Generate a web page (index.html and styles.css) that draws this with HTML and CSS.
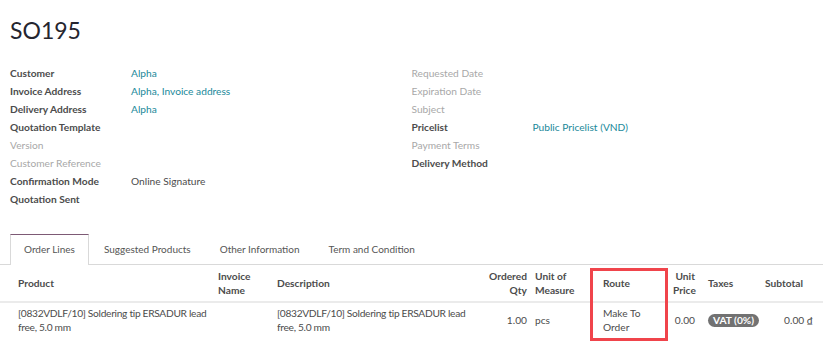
FILE: index.html
```html
<!DOCTYPE html>
<html lang="en">
<head>
  <meta charset="UTF-8" />
  <title>SO195</title>
  <link rel="stylesheet" href="styles.css">
</head>
<body>
  <div class="sheet">
    <h1 class="title">SO195</h1>
    <div class="groups">
      <table class="group">
        <tr><td class="label">Customer</td><td><a href="#">Alpha</a></td></tr>
        <tr><td class="label">Invoice Address</td><td><a href="#">Alpha, Invoice address</a></td></tr>
        <tr><td class="label">Delivery Address</td><td><a href="#">Alpha</a></td></tr>
        <tr><td class="label">Quotation Template</td><td></td></tr>
        <tr><td class="label empty">Version</td><td></td></tr>
        <tr><td class="label empty">Customer Reference</td><td></td></tr>
        <tr><td class="label">Confirmation Mode</td><td>Online Signature</td></tr>
        <tr><td class="label">Quotation Sent</td><td></td></tr>
      </table>
      <table class="group">
        <tr><td class="label empty">Requested Date</td><td></td></tr>
        <tr><td class="label empty">Expiration Date</td><td></td></tr>
        <tr><td class="label empty">Subject</td><td></td></tr>
        <tr><td class="label">Pricelist</td><td><a href="#">Public Pricelist (VND)</a></td></tr>
        <tr><td class="label empty">Payment Terms</td><td></td></tr>
        <tr><td class="label">Delivery Method</td><td></td></tr>
      </table>
    </div>
  </div>

  <ul class="tabs">
    <li class="active">Order Lines</li>
    <li>Suggested Products</li>
    <li>Other Information</li>
    <li>Term and Condition</li>
  </ul>

  <div class="lines">
    <table class="list">
      <colgroup>
        <col style="width:214px">
        <col style="width:59px">
        <col style="width:200px">
        <col style="width:58px">
        <col style="width:68px">
        <col style="width:70px">
        <col style="width:30px">
        <col style="width:62px">
        <col>
      </colgroup>
      <thead>
        <tr>
          <th class="first">Product</th>
          <th>Invoice<br>Name</th>
          <th>Description</th>
          <th class="num">Ordered<br>Qty</th>
          <th>Unit of<br>Measure</th>
          <th>Route</th>
          <th class="num">Unit<br>Price</th>
          <th class="taxes">Taxes</th>
          <th>Subtotal</th>
        </tr>
      </thead>
      <tbody>
        <tr>
          <td class="first text">[0832VDLF/10] Soldering tip ERSADUR lead free, 5.0 mm</td>
          <td></td>
          <td class="text">[0832VDLF/10] Soldering tip ERSADUR lead free, 5.0 mm</td>
          <td class="num">1.00</td>
          <td>pcs</td>
          <td>Make To<br>Order</td>
          <td class="num">0.00</td>
          <td class="taxes"><span class="badge">VAT (0%)</span></td>
          <td class="num last">0.00 ₫</td>
        </tr>
      </tbody>
    </table>
    <div class="highlight"></div>
  </div>
</body>
</html>
```

FILE: styles.css
```css
body {
  margin: 0;
  font-family: Lato, "Open Sans", sans-serif;
  font-size: 10.2px;
  color: #4c4c4c;
  background: #fff;
}
a {
  color: #21899a;
  text-decoration: none;
}
.sheet {
  padding: 0 10px;
}
.title {
  margin: 0;
  padding-top: 15px;
  height: 49px;
  font-size: 23px;
  font-weight: 400;
  line-height: 30px;
  color: #25252f;
}
.groups {
  display: flex;
  align-items: flex-start;
}
.group {
  width: 402px;
  border-collapse: collapse;
}
.group td {
  height: 18px;
  padding: 0;
  vertical-align: middle;
}
.group .label {
  width: 121px;
  font-weight: 700;
  color: #4c4c4c;
}
.group .label.empty {
  color: #a8a8a8;
  font-weight: 400;
}

/* notebook tabs */
.tabs {
  display: flex;
  list-style: none;
  margin: 26px 0 0;
  padding: 0 0 0 10px;
  border-bottom: 1px solid #d9d9d9;
  font-size: 10px;
}
.tabs li {
  height: 29px;
  line-height: 29px;
  padding: 0 13px;
  border: 1px solid transparent;
  border-bottom: 0;
  color: #555;
  margin-right: 1px;
}
.tabs li.active {
  border-color: #d9d9d9;
  border-top-color: #7d5a75;
  background: #fff;
  margin-bottom: -1px;
  height: 30px;
}

/* order lines */
.lines {
  position: relative;
  padding-bottom: 18px;
}
.list {
  width: 100%;
  border-collapse: collapse;
  table-layout: fixed;
}
.list th,
.list td {
  padding: 0 4px;
  text-align: left;
  line-height: 14px;
}
.list th {
  height: 36px;
  font-weight: 700;
  color: #4c4c4c;
  border-bottom: 2px solid #ebebeb;
  vertical-align: middle;
}
.list td {
  padding-top: 3px;
  padding-bottom: 3px;
  vertical-align: middle;
}
.list .text {
  letter-spacing: -0.3px;
}
.list .first {
  padding-left: 18px;
}
.list .num {
  text-align: right;
}
.list .taxes {
  padding-left: 9px;
}
.list .last {
  padding-right: 10px;
}
.badge {
  display: inline-block;
  padding: 0 5px;
  border-radius: 8px;
  background: #727272;
  color: #fff;
  font-weight: 700;
  line-height: 13px;
  white-space: nowrap;
}
.highlight {
  position: absolute;
  left: 590px;
  top: 3px;
  width: 72px;
  height: 67px;
  border: 3px solid #f0444b;
}
```
